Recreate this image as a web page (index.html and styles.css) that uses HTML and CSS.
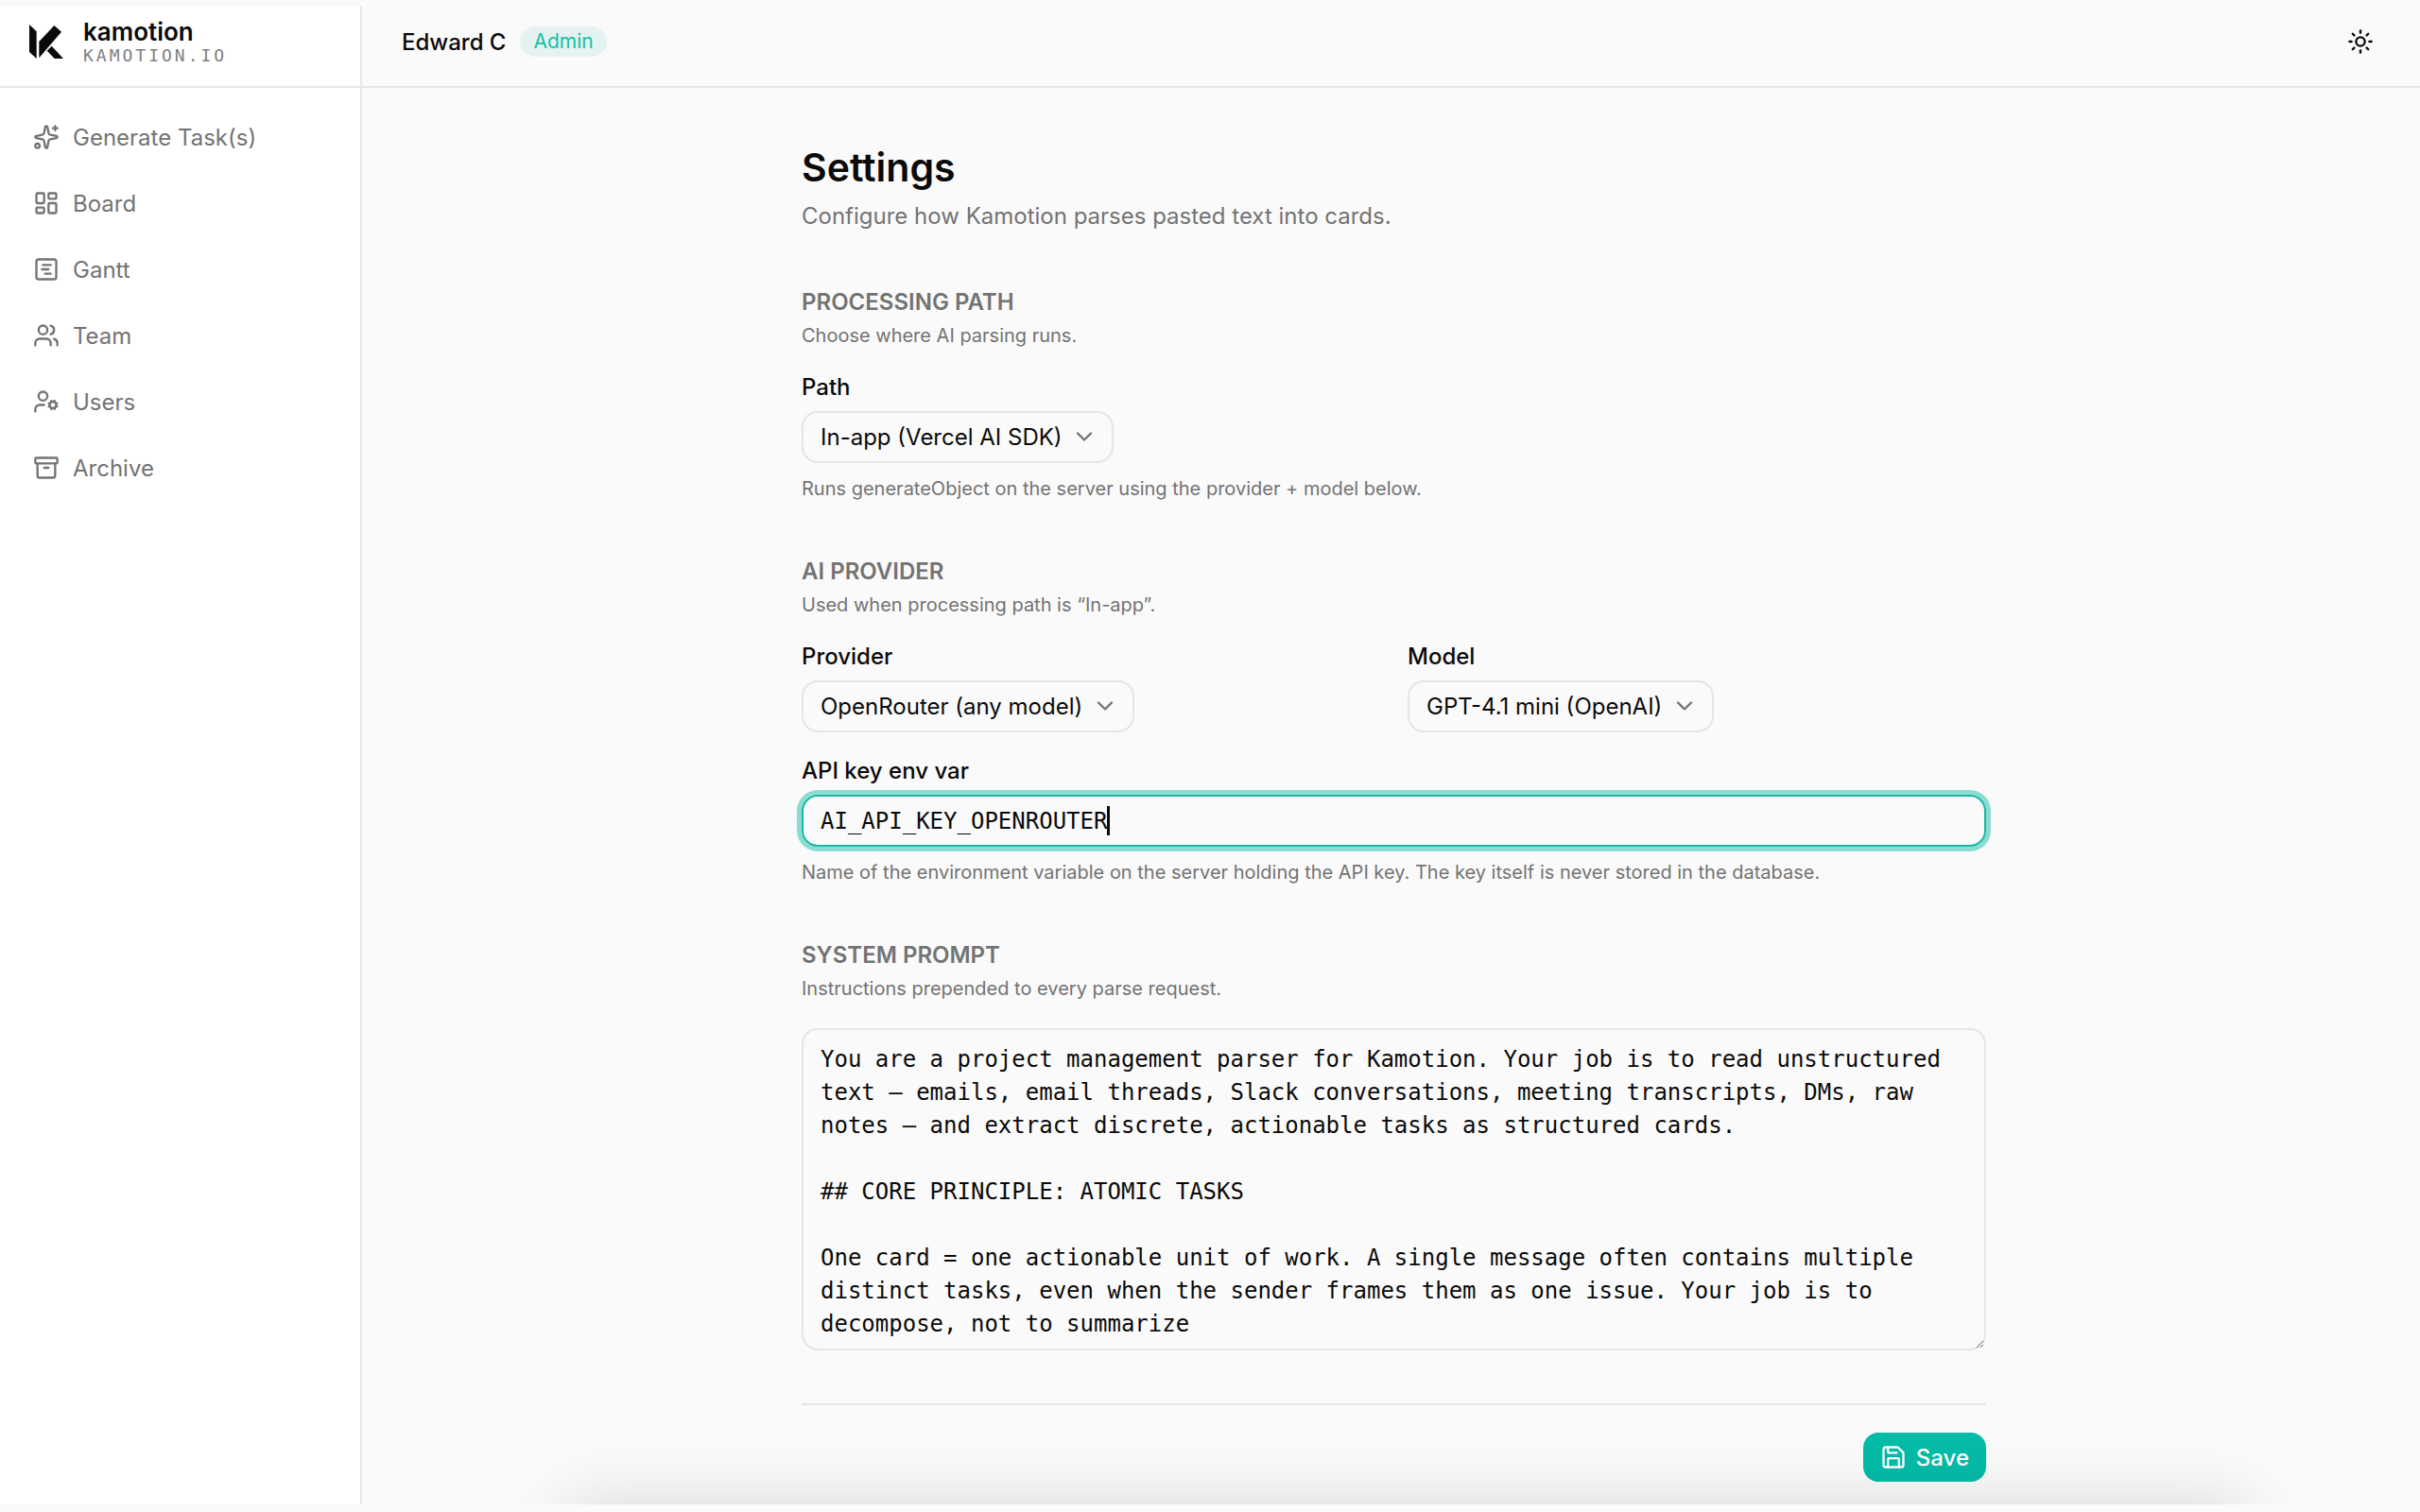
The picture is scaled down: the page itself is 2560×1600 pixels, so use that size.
FILE: index.html
```
<!DOCTYPE html>
<html lang="en">
<head>
    <meta charset="UTF-8">
    <meta name="viewport" content="width=device-width, initial-scale=1.0">
    <title>Settings - Kamotion</title>
    <link rel="stylesheet" href="styles.css">
</head>
<body>
    <div class="app">
        <aside class="sidebar">
            <a class="brand" href="#">
                <svg class="brand-logo" viewBox="0 0 108 108" fill="currentColor" aria-hidden="true">
                    <path d="M0 0 23 22V108L0 87Z"/>
                    <path d="M31 54 79 3 102 23 31 106Z"/>
                    <path d="M56 83 71 68 108 108H80Z"/>
                </svg>
                <span class="brand-text">
                    <span class="brand-name">kamotion</span>
                    <span class="brand-domain">KAMOTION.IO</span>
                </span>
            </a>
            <nav class="nav">
                <a href="#">
                    <svg class="icon" viewBox="0 0 24 24"><path d="M11.017 2.814a1 1 0 0 1 1.966 0l1.051 5.558a2 2 0 0 0 1.594 1.594l5.558 1.051a1 1 0 0 1 0 1.966l-5.558 1.051a2 2 0 0 0-1.594 1.594l-1.051 5.558a1 1 0 0 1-1.966 0l-1.051-5.558a2 2 0 0 0-1.594-1.594l-5.558-1.051a1 1 0 0 1 0-1.966l5.558-1.051a2 2 0 0 0 1.594-1.594z"/><path d="M20 2v4"/><path d="M22 4h-4"/><circle cx="4" cy="20" r="2"/></svg>
                    Generate Task(s)
                </a>
                <a href="#">
                    <svg class="icon" viewBox="0 0 24 24"><rect width="7" height="9" x="3" y="3" rx="1"/><rect width="7" height="5" x="14" y="3" rx="1"/><rect width="7" height="9" x="14" y="12" rx="1"/><rect width="7" height="5" x="3" y="16" rx="1"/></svg>
                    Board
                </a>
                <a href="#">
                    <svg class="icon" viewBox="0 0 24 24"><rect width="18" height="18" x="3" y="3" rx="2"/><path d="M9 8h7"/><path d="M8 12h6"/><path d="M11 16h5"/></svg>
                    Gantt
                </a>
                <a href="#">
                    <svg class="icon" viewBox="0 0 24 24"><path d="M16 21v-2a4 4 0 0 0-4-4H6a4 4 0 0 0-4 4v2"/><circle cx="9" cy="7" r="4"/><path d="M22 21v-2a4 4 0 0 0-3-3.87"/><path d="M16 3.13a4 4 0 0 1 0 7.75"/></svg>
                    Team
                </a>
                <a href="#">
                    <svg class="icon" viewBox="0 0 24 24"><path d="M10 15H6a4 4 0 0 0-4 4v2"/><path d="m14.305 16.53.923-.382"/><path d="m15.228 13.852-.923-.383"/><path d="m16.852 12.228-.383-.923"/><path d="m16.852 17.772-.383.924"/><path d="m19.148 12.228.383-.923"/><path d="m19.53 18.696-.382-.924"/><path d="m20.772 13.852.924-.383"/><path d="m20.772 16.148.924.383"/><circle cx="18" cy="15" r="3"/><circle cx="9" cy="7" r="4"/></svg>
                    Users
                </a>
                <a href="#">
                    <svg class="icon" viewBox="0 0 24 24"><rect width="20" height="5" x="2" y="3" rx="1"/><path d="M4 8v11a2 2 0 0 0 2 2h12a2 2 0 0 0 2-2V8"/><path d="M10 12h4"/></svg>
                    Archive
                </a>
            </nav>
        </aside>

        <div class="page">
            <header class="topbar">
                <span class="user-name">Edward C</span>
                <span class="badge">Admin</span>
                <button class="theme-toggle" type="button" aria-label="Toggle theme">
                    <svg class="icon" viewBox="0 0 24 24"><circle cx="12" cy="12" r="4"/><path d="M12 2v2"/><path d="M12 20v2"/><path d="m4.93 4.93 1.41 1.41"/><path d="m17.66 17.66 1.41 1.41"/><path d="M2 12h2"/><path d="M20 12h2"/><path d="m6.34 17.66-1.41 1.41"/><path d="m19.07 4.93-1.41 1.41"/></svg>
                </button>
            </header>

            <main class="main">
                <form class="settings">
                    <h1>Settings</h1>
                    <p class="subtitle">Configure how Kamotion parses pasted text into cards.</p>

                    <section class="section">
                        <h2>Processing path</h2>
                        <p class="hint">Choose where AI parsing runs.</p>
                        <div class="field">
                            <label for="path">Path</label>
                            <div class="select">
                                <select id="path"><option>In-app (Vercel AI SDK)</option></select>
                                <svg class="icon" viewBox="0 0 24 24"><path d="m6 9 6 6 6-6"/></svg>
                            </div>
                            <p class="hint">Runs generateObject on the server using the provider + model below.</p>
                        </div>
                    </section>

                    <section class="section">
                        <h2>AI provider</h2>
                        <p class="hint">Used when processing path is “In-app”.</p>
                        <div class="field-row">
                            <div class="field">
                                <label for="provider">Provider</label>
                                <div class="select">
                                    <select id="provider"><option>OpenRouter (any model)</option></select>
                                    <svg class="icon" viewBox="0 0 24 24"><path d="m6 9 6 6 6-6"/></svg>
                                </div>
                            </div>
                            <div class="field">
                                <label for="model">Model</label>
                                <div class="select">
                                    <select id="model"><option>GPT-4.1 mini (OpenAI)</option></select>
                                    <svg class="icon" viewBox="0 0 24 24"><path d="m6 9 6 6 6-6"/></svg>
                                </div>
                            </div>
                        </div>
                        <div class="field">
                            <label for="api-key">API key env var</label>
                            <div class="text-input">
                                <input id="api-key" class="is-focused" type="text" value="AI_API_KEY_OPENROUTER" spellcheck="false">
                                <span class="caret"></span>
                            </div>
                            <p class="hint">Name of the environment variable on the server holding the API key. The key itself is never stored in the database.</p>
                        </div>
                    </section>

                    <section class="section">
                        <h2><label for="prompt">System prompt</label></h2>
                        <p class="hint">Instructions prepended to every parse request.</p>
                        <textarea id="prompt" rows="9" spellcheck="false">You are a project management parser for Kamotion. Your job is to read unstructured text — emails, email threads, Slack conversations, meeting transcripts, DMs, raw notes — and extract discrete, actionable tasks as structured cards.

## CORE PRINCIPLE: ATOMIC TASKS

One card = one actionable unit of work. A single message often contains multiple distinct tasks, even when the sender frames them as one issue. Your job is to decompose, not to summarize</textarea>
                    </section>

                    <div class="actions">
                        <button class="save" type="submit">
                            <svg class="icon" viewBox="0 0 24 24"><path d="M15.2 3a2 2 0 0 1 1.4.6l3.8 3.8a2 2 0 0 1 .6 1.4V19a2 2 0 0 1-2 2H5a2 2 0 0 1-2-2V5a2 2 0 0 1 2-2z"/><path d="M17 21v-7a1 1 0 0 0-1-1H8a1 1 0 0 0-1 1v7"/><path d="M7 3v4a1 1 0 0 0 1 1h7"/></svg>
                            Save
                        </button>
                    </div>
                </form>
            </main>
        </div>
        <div class="dock-shade"></div>
    </div>
</body>
</html>
```
FILE: styles.css
```
* {
    box-sizing: border-box;
}
body {
    margin: 0;
    min-height: 100vh;
    display: flex;
    padding: 7px 0 8px;
    background-color: #fafafa;
    color: #0a0a0a;
    font-family: Inter, sans-serif;
    font-size: 24px;
    line-height: 35px;
}
h1, h2, p {
    margin: 0;
}
button, input, select, textarea {
    font: inherit;
    color: inherit;
}
.icon {
    width: 28px;
    height: 28px;
    flex: none;
    fill: none;
    stroke: currentColor;
    stroke-width: 2;
    stroke-linecap: round;
    stroke-linejoin: round;
}
.app {
    position: relative;
    flex: 1;
    display: flex;
    overflow: hidden;
}

/* sidebar */
.sidebar {
    width: 383px;
    flex: none;
    background-color: #ffffff;
    border-right: 2px solid #e5e5e5;
}
.brand, .topbar {
    display: flex;
    align-items: center;
    height: 86px;
    border-bottom: 2px solid #e5e5e5;
}
.brand {
    gap: 21px;
    padding: 0 31px 10px;
    color: inherit;
    text-decoration: none;
}
.brand-logo {
    width: 36px;
    height: 36px;
}
.brand-text {
    display: flex;
    flex-direction: column;
}
.brand-name {
    font-size: 26px;
    font-weight: 600;
    line-height: 30px;
}
.brand-domain {
    font-family: "DejaVu Sans Mono", monospace;
    font-size: 18px;
    line-height: 20px;
    letter-spacing: 3px;
    color: #808080;
}
.nav {
    display: flex;
    flex-direction: column;
    gap: 8px;
    padding: 21px 14px;
}
.nav a {
    display: flex;
    align-items: center;
    gap: 14px;
    height: 62px;
    padding: 0 21px;
    color: #737373;
    text-decoration: none;
}

/* top bar */
.page {
    flex: 1;
    min-width: 0;
}
.topbar {
    gap: 15px;
    padding: 0 49px 10px 42px;
}
.user-name {
    font-weight: 500;
}
.badge {
    padding: 0 14px;
    border-radius: 16px;
    background-color: #e4f3f1;
    color: #14c0a6;
    font-size: 21px;
    line-height: 32px;
}
.theme-toggle {
    display: flex;
    margin-left: auto;
    padding: 0;
    border: none;
    background: none;
    cursor: pointer;
}

/* settings form */
.main {
    padding: 58px 40px 20px 46px;
}
.settings {
    max-width: 1253px;
    margin: 0 auto;
}
h1 {
    font-size: 41px;
    font-weight: 600;
    line-height: 52px;
}
.subtitle {
    margin-top: 8px;
    color: #737373;
}
.section {
    margin-top: 56px;
}
h2 {
    margin-bottom: 4px;
    font-size: 24px;
    font-weight: 600;
    color: #737373;
    text-transform: uppercase;
}
.hint {
    font-size: 20px;
    line-height: 28px;
    color: #737373;
}
.field {
    display: flex;
    flex-direction: column;
    align-items: flex-start;
    gap: 13px;
    margin-top: 28px;
}
.field label {
    font-weight: 500;
    line-height: 25px;
}
.field-row {
    display: grid;
    grid-template-columns: 1fr 1fr;
    gap: 29px;
}
.select {
    position: relative;
}
.select select {
    display: block;
    height: 55px;
    padding: 0 52px 0 18px;
    border: 2px solid #e5e5e5;
    border-radius: 17px;
    background-color: transparent;
    appearance: none;
}
.select .icon {
    position: absolute;
    right: 17px;
    top: 13px;
    color: #737373;
    pointer-events: none;
}
.text-input {
    position: relative;
    width: 100%;
    font-family: "DejaVu Sans Mono", monospace;
}
.text-input input {
    display: block;
    width: 100%;
    height: 55px;
    padding: 0 18px;
    border: 2px solid #e5e5e5;
    border-radius: 17px;
    background-color: transparent;
    outline: none;
}
.text-input input.is-focused {
    border-color: #14b8a6;
    box-shadow: 0 0 0 5px #8cdcd1;
}
.caret {
    position: absolute;
    left: calc(20px + 21ch);
    top: 12px;
    width: 3px;
    height: 31px;
    background-color: #0a0a0a;
}
textarea {
    display: block;
    width: 100%;
    margin-top: 28px;
    padding: 14px 18px 8px;
    border: 2px solid #e5e5e5;
    border-radius: 17px;
    background-color: transparent;
    font-family: "DejaVu Sans Mono", monospace;
    resize: vertical;
    outline: none;
}
.actions {
    display: flex;
    justify-content: flex-end;
    margin-top: 56px;
    padding-top: 29px;
    border-top: 2px solid #e5e5e5;
}
.save {
    display: flex;
    align-items: center;
    gap: 10px;
    height: 52px;
    padding: 0 18px;
    border: none;
    border-radius: 16px;
    background-color: #04bba7;
    color: #ffffff;
    font-weight: 500;
    cursor: pointer;
}

/* soft shade rising from the bottom edge */
.dock-shade {
    position: absolute;
    top: 100%;
    left: 600px;
    right: 185px;
    height: 80px;
    box-shadow: 0 0 70px rgba(0, 0, 0, 0.14);
    pointer-events: none;
}
```
